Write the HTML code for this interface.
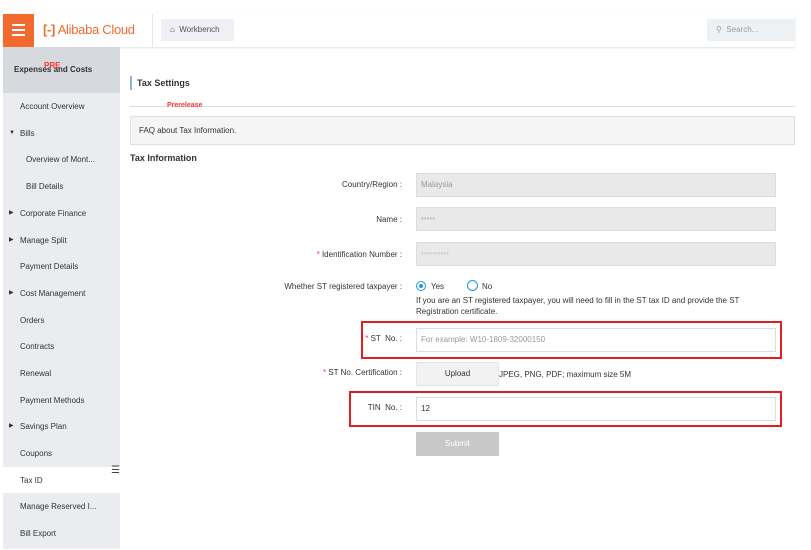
<!DOCTYPE html>
<html><head><meta charset="utf-8"><style>
*{margin:0;padding:0;box-sizing:border-box}
body{width:811px;height:550px;background:#fff;font-family:"Liberation Sans",Arial,sans-serif;position:relative;overflow:hidden;color:#333}
.a{position:absolute}
.top{left:3px;top:14px;width:792px;height:33px;background:#fff;box-shadow:0 1px 2px rgba(0,0,0,.12)}
.ham{left:3px;top:14px;width:31px;height:33px;background:#f26a2e}
.ham i{position:absolute;left:9px;width:13px;height:2px;background:#fff}
.side{left:3px;top:47px;width:117px;height:502px;background:#eaecef}
.sh{left:3px;top:47px;width:117px;height:46px;background:#d6d9de}
.it{position:absolute;font-size:8px;color:#333;left:20px}
.lbl{position:absolute;font-size:8px;color:#333;text-align:right;width:200px}
.inp{position:absolute;left:416px;width:360px;height:24px;border:1px solid #ddd;font-size:8px;padding:0 4px;line-height:22px}
.red{position:absolute;border:2px solid #e02020}
.tri{position:absolute;left:9px;font-size:6px;color:#333}
</style></head><body>
<div class="a top"></div>
<div class="a ham"><i style="top:10px"></i><i style="top:15px"></i><i style="top:20px"></i></div>
<div class="a" style="left:43px;top:22px;font-size:13px;color:#f26a2e;letter-spacing:-.3px"><span style="font-weight:bold">[-]</span> Alibaba Cloud</div>
<div class="a" style="left:152px;top:14px;width:1px;height:33px;background:#e6e6e6"></div>
<div class="a" style="left:161px;top:19px;width:73px;height:22px;background:#eef0f3;font-size:8px;color:#555;line-height:22px;padding-left:9px">⌂ &nbsp;Workbench</div>
<div class="a" style="left:707px;top:19px;width:88px;height:22px;background:#eef1f4;font-size:8px;color:#999;line-height:22px;padding-left:9px">&#9906; &nbsp;Search...</div>
<div class="a side"></div>
<div class="a sh"></div>
<div class="a" style="left:14px;top:65px;font-size:8px;font-weight:bold;color:#333">Expenses and Costs</div>
<div class="a" style="left:44px;top:61px;font-size:8px;font-weight:bold;color:#f33">PRE</div>
<div class="a" style="left:3px;top:467px;width:117px;height:26px;background:#fff"></div>
<div class="a" style="left:111px;top:465px;font-size:10px;color:#444">☰</div>
<div class="it" style="top:102px">Account Overview</div>
<div class="tri" style="top:130px">▼</div><div class="it" style="top:129px">Bills</div>
<div class="it" style="top:155px;left:26px">Overview of Mont...</div>
<div class="it" style="top:182px;left:26px">Bill Details</div>
<div class="tri" style="top:209px">▶</div><div class="it" style="top:209px">Corporate Finance</div>
<div class="tri" style="top:236px">▶</div><div class="it" style="top:236px">Manage Split</div>
<div class="it" style="top:262px">Payment Details</div>
<div class="tri" style="top:289px">▶</div><div class="it" style="top:289px">Cost Management</div>
<div class="it" style="top:316px">Orders</div>
<div class="it" style="top:342px">Contracts</div>
<div class="it" style="top:369px">Renewal</div>
<div class="it" style="top:396px">Payment Methods</div>
<div class="tri" style="top:422px">▶</div><div class="it" style="top:422px">Savings Plan</div>
<div class="it" style="top:449px">Coupons</div>
<div class="it" style="top:476px">Tax ID</div>
<div class="it" style="top:502px">Manage Reserved I...</div>
<div class="it" style="top:529px">Bill Export</div>

<div class="a" style="left:130px;top:76px;width:2px;height:14px;background:#8fb0d8"></div>
<div class="a" style="left:137px;top:78px;font-size:9px;font-weight:bold;color:#333">Tax Settings</div>
<div class="a" style="left:130px;top:106px;width:665px;height:1px;background:#ddd"></div>
<div class="a" style="left:167px;top:102px;font-size:7px;font-weight:bold;color:#f33">Prerelease</div>
<div class="a" style="left:130px;top:116px;width:665px;height:29px;background:#f5f5f5;border:1px solid #e0e0e0;font-size:8px;line-height:27px;padding-left:8px;color:#333">FAQ about Tax Information.</div>
<div class="a" style="left:130px;top:153px;font-size:9px;font-weight:bold;color:#333">Tax Information</div>

<div class="lbl" style="left:202px;top:180px">Country/Region :</div>
<div class="inp" style="top:173px;background:#e9e9e9;color:#999">Malaysia</div>
<div class="lbl" style="left:202px;top:215px">Name :</div>
<div class="inp" style="top:207px;background:#e9e9e9;color:#bbb">•••••</div>
<div class="lbl" style="left:202px;top:250px"><span style="color:#f33">*</span> Identification Number :</div>
<div class="inp" style="top:242px;background:#e9e9e9;color:#ccc">••••••••••</div>
<div class="lbl" style="left:202px;top:282px">Whether ST registered taxpayer :</div>
<div class="a" style="left:416px;top:281px;width:10px;height:10px;border-radius:50%;border:1px solid #1a9bdc;background:#fff"><div style="margin:2px;width:4px;height:4px;border-radius:50%;background:#1a9bdc"></div></div>
<div class="a" style="left:431px;top:282px;font-size:8px">Yes</div>
<div class="a" style="left:467px;top:280px;width:11px;height:11px;border-radius:50%;border:1px solid #1a9bdc"></div>
<div class="a" style="left:482px;top:282px;font-size:8px">No</div>
<div class="a" style="left:416px;top:295px;width:360px;font-size:8px;line-height:11px">If you are an ST registered taxpayer, you will need to fill in the ST tax ID and provide the ST Registration certificate.</div>
<div class="red" style="left:361px;top:321px;width:421px;height:38px"></div>
<div class="lbl" style="left:202px;top:334px"><span style="color:#f33">*</span> ST &nbsp;No. :</div>
<div class="inp" style="top:328px;background:#fff;color:#999">For example: W10-1809-32000150</div>
<div class="lbl" style="left:202px;top:368px"><span style="color:#f33">*</span> ST No. Certification :</div>
<div class="a" style="left:416px;top:362px;width:83px;height:24px;background:#f2f2f2;border:1px solid #e6e6e6;font-size:8px;text-align:center;line-height:22px">Upload</div>
<div class="a" style="left:499px;top:370px;font-size:8px">JPEG, PNG, PDF; maximum size 5M</div>
<div class="red" style="left:349px;top:391px;width:433px;height:36px"></div>
<div class="lbl" style="left:202px;top:403px">TIN &nbsp;No. :</div>
<div class="inp" style="top:397px;background:#fff;color:#333">12</div>
<div class="a" style="left:416px;top:432px;width:83px;height:24px;background:#c8c8c8;color:#fff;font-size:8px;text-align:center;line-height:24px">Submit</div>
</body></html>
